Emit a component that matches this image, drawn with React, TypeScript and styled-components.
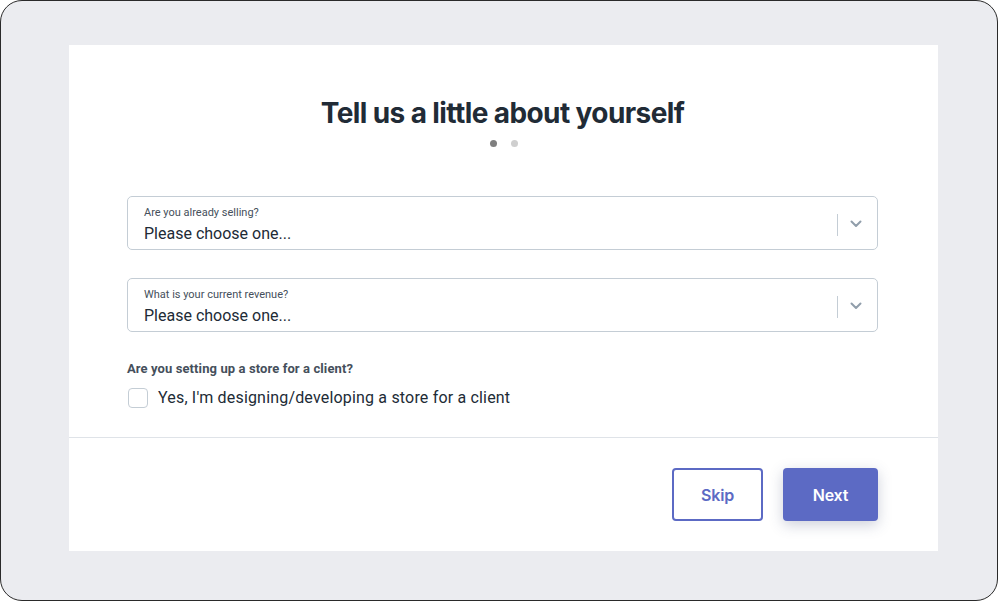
import React from "react";
import styled, { createGlobalStyle } from "styled-components";

const Global = createGlobalStyle`
  html, body { margin: 0; padding: 0; background: #ffffff; }
  * { box-sizing: border-box; }
  body { font-family: Roboto, "Noto Sans", sans-serif; -webkit-font-smoothing: antialiased; }
`;

const Frame = styled.div`
  width: 998px;
  height: 601px;
  border: 1px solid #2a2a2a;
  border-radius: 22px;
  background: #ebecf0;
  padding: 44px 59px 0 68px;
  overflow: hidden;
`;

const Card = styled.div`
  width: 869px;
  height: 506px;
  background: #ffffff;
  display: flex;
  flex-direction: column;
`;

const Body = styled.div`
  padding: 50px 60px 0 58px;
  display: flex;
  flex-direction: column;
  height: 393px;
  border-bottom: 1px solid #dfe3e8;
`;

const Title = styled.h1`
  margin: 0;
  font-family: Inter, "Noto Sans", sans-serif;
  font-size: 28px;
  line-height: 36px;
  font-weight: 700;
  color: #212b36;
  text-align: center;
  letter-spacing: -0.6px;
`;

const Dots = styled.div`
  display: flex;
  justify-content: center;
  gap: 14px;
  margin-top: 9px;
  padding-left: 2px;
`;

const Dot = styled.span<{ $active?: boolean }>`
  width: 7px;
  height: 7px;
  border-radius: 50%;
  background: ${(p) => (p.$active ? "#7f7f7f" : "#cfcfcf")};
`;

const Select = styled.div<{ $mt: number }>`
  margin-top: ${(p) => p.$mt}px;
  height: 54px;
  border: 1px solid #c4cdd5;
  border-radius: 5px;
  display: flex;
  align-items: center;
  padding: 0 3px 0 16px;
`;

const SelectText = styled.div`
  flex: 1;
  display: flex;
  flex-direction: column;
  gap: 3px;
  padding-top: 4px;
`;

const SelectLabel = styled.span`
  font-size: 11px;
  line-height: 14px;
  color: #454f5b;
`;

const SelectValue = styled.span`
  font-size: 16px;
  line-height: 22px;
  color: #212b36;
`;

const Sep = styled.span`
  width: 1px;
  height: 22px;
  background: #c4cdd5;
  margin-top: 4px;
`;

const Chevron = styled.span`
  width: 36px;
  display: flex;
  justify-content: center;
  align-items: center;
  margin-top: 2px;
`;

const Question = styled.div`
  margin-top: 29px;
  font-size: 13px;
  line-height: 16px;
  font-weight: 700;
  color: #454f5b;
  letter-spacing: 0.1px;
`;

const CheckRow = styled.label`
  margin-top: 9px;
  display: flex;
  align-items: center;
  gap: 10px;
  padding-left: 1px;
`;

const Box = styled.span`
  width: 20px;
  height: 20px;
  border: 1px solid #c4cdd5;
  border-radius: 4px;
  background: #fff;
`;

const CheckText = styled.span`
  font-size: 16px;
  line-height: 22px;
  color: #212b36;
  letter-spacing: 0.18px;
  padding-top: 1px;
`;

const Footer = styled.div`
  flex: 1;
  display: flex;
  justify-content: flex-end;
  align-items: center;
  gap: 20px;
  padding: 0 60px 0 0;
`;

const Button = styled.button<{ $primary?: boolean }>`
  height: 53px;
  width: ${(p) => (p.$primary ? 95 : 91)}px;
  border-radius: 4px;
  font-family: Inter, "Noto Sans", sans-serif;
  font-size: 16px;
  font-weight: 600;
  letter-spacing: -0.2px;
  cursor: pointer;
  border: ${(p) => (p.$primary ? "none" : "2px solid #5c6ac4")};
  background: ${(p) => (p.$primary ? "#5c6ac4" : "#ffffff")};
  color: ${(p) => (p.$primary ? "#ffffff" : "#5c6ac4")};
  box-shadow: ${(p) => (p.$primary ? "0 4px 14px rgba(60, 70, 110, 0.25)" : "none")};
`;

const ChevronIcon = () => (
  <svg width="12" height="8" viewBox="0 0 12 8">
    <path d="M1.5 1.5 L6 6 L10.5 1.5" fill="none" stroke="#919eab" strokeWidth="2" strokeLinecap="round" strokeLinejoin="round" />
  </svg>
);

export default function App() {
  return (
    <>
      <Global />
      <Frame>
        <Card>
          <Body>
            <Title>Tell us a little about yourself</Title>
            <Dots>
              <Dot $active />
              <Dot />
            </Dots>
            <Select $mt={49}>
              <SelectText>
                <SelectLabel>Are you already selling?</SelectLabel>
                <SelectValue>Please choose one...</SelectValue>
              </SelectText>
              <Sep />
              <Chevron>
                <ChevronIcon />
              </Chevron>
            </Select>
            <Select $mt={28}>
              <SelectText>
                <SelectLabel>What is your current revenue?</SelectLabel>
                <SelectValue>Please choose one...</SelectValue>
              </SelectText>
              <Sep />
              <Chevron>
                <ChevronIcon />
              </Chevron>
            </Select>
            <Question>Are you setting up a store for a client?</Question>
            <CheckRow>
              <Box />
              <CheckText>Yes, I'm designing/developing a store for a client</CheckText>
            </CheckRow>
          </Body>
          <Footer>
            <Button>Skip</Button>
            <Button $primary>Next</Button>
          </Footer>
        </Card>
      </Frame>
    </>
  );
}
